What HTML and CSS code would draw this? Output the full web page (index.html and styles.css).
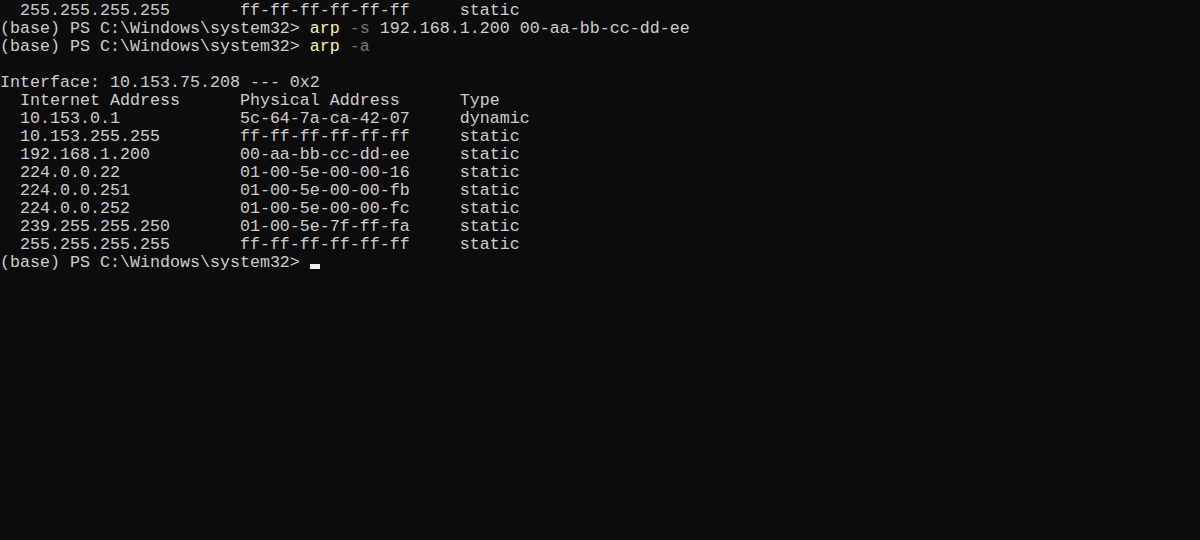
FILE: index.html
```html
<!DOCTYPE html>
<html>
<head>
<meta charset="utf-8">
<link rel="stylesheet" href="styles.css">
</head>
<body>
<pre class="term">  255.255.255.255       ff-ff-ff-ff-ff-ff     static
(base) PS C:\Windows\system32&gt; <span class="cmd">arp</span> <span class="opt">-s</span> 192.168.1.200 00-aa-bb-cc-dd-ee
(base) PS C:\Windows\system32&gt; <span class="cmd">arp</span> <span class="opt">-a</span>

Interface: 10.153.75.208 --- 0x2
  Internet Address      Physical Address      Type
  10.153.0.1            5c-64-7a-ca-42-07     dynamic
  10.153.255.255        ff-ff-ff-ff-ff-ff     static
  192.168.1.200         00-aa-bb-cc-dd-ee     static
  224.0.0.22            01-00-5e-00-00-16     static
  224.0.0.251           01-00-5e-00-00-fb     static
  224.0.0.252           01-00-5e-00-00-fc     static
  239.255.255.250       01-00-5e-7f-ff-fa     static
  255.255.255.255       ff-ff-ff-ff-ff-ff     static
(base) PS C:\Windows\system32&gt; <span class="cursor"></span></pre>
</body>
</html>
```
FILE: styles.css
```css
html, body {
  margin: 0;
  padding: 0;
  background: #0c0c0c;
  height: 100%;
  overflow: hidden;
}
.term {
  margin: 0;
  padding: 2px 0 0 0;
  font-family: "Liberation Mono", "DejaVu Sans Mono", monospace;
  font-size: 16.667px;
  line-height: 18px;
  color: #cccccc;
  white-space: pre;
}
.cmd { color: #f9f1a5; }
.opt { color: #767676; }
.cursor {
  display: inline-block;
  width: 10px;
  height: 5px;
  background: #f0f0f0;
  vertical-align: -2px;
}
```
